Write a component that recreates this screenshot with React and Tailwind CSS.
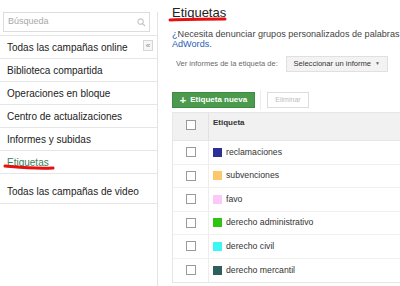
import React from 'react';

const navItems = [
  'Todas las campañas online',
  'Biblioteca compartida',
  'Operaciones en bloque',
  'Centro de actualizaciones',
  'Informes y subidas',
  'Etiquetas',
];

const labels = [
  { name: 'reclamaciones', color: 'bg-[#2e2f94]' },
  { name: 'subvenciones', color: 'bg-[#fdc86a]' },
  { name: 'favo', color: 'bg-[#fbc9f7]' },
  { name: 'derecho administrativo', color: 'bg-[#2fc312]' },
  { name: 'derecho civil', color: 'bg-[#3cf6f6]' },
  { name: 'derecho mercantil', color: 'bg-[#2f5f5c]' },
];

const Checkbox = () => (
  <span className="block w-[10px] h-[10px] border border-[#9a9a9a] bg-white" />
);

const Sidebar = () => (
  <aside className="relative w-[158px] shrink-0 mt-[12px] border-r border-[#e3e3e3]">
    <div className="pl-[3px] pr-[7px] pb-[3px] border-b border-[#e6e6e6]">
      <div className="h-[20px] border border-[#dcdcdc] flex items-center justify-between pl-[4px] pr-[3px]">
        <span className="text-[9px] text-[#a8a8a8]">Búsqueda</span>
        <svg width="9" height="9" viewBox="0 0 10 10" className="text-[#c4c4c4]">
          <circle cx="4" cy="4" r="3" fill="none" stroke="currentColor" strokeWidth="1.2" />
          <path d="M6.2 6.2 L9 9" stroke="currentColor" strokeWidth="1.4" />
        </svg>
      </div>
    </div>
    {navItems.map((item) => (
      <div
        key={item}
        className={`h-[23px] flex items-center pl-[7px] border-b border-[#e6e6e6] text-[10px] whitespace-nowrap ${
          item === 'Etiquetas' ? 'text-[#3b7d57]' : 'text-[#222]'
        }`}
      >
        {item}
      </div>
    ))}
    <div className="h-[30px] flex items-center pt-[6px] pl-[7px] border-b border-[#e6e6e6] text-[10px] text-[#222] whitespace-nowrap">
      Todas las campañas de video
    </div>

    <div className="absolute left-[143px] top-[28px] w-[10px] h-[11px] border border-[#d6d6d6] bg-[#f6f6f6] flex items-center justify-center text-[8px] leading-none text-[#888]">
      «
    </div>

    <svg className="absolute left-[3px] top-[151px]" width="52" height="8" viewBox="0 0 52 8">
      <path d="M2 3 C14 4 30 6 50 5" stroke="#e8100e" strokeWidth="3" fill="none" strokeLinecap="round" />
    </svg>
  </aside>
);

const Main = () => (
  <main className="relative flex-1 min-w-0 overflow-hidden pl-[14px] whitespace-nowrap">
    <h1 className="mt-[5px] text-[13px] leading-[16px] text-[#222]">Etiquetas</h1>
    <svg className="absolute left-[10px] top-[16px]" width="60" height="7" viewBox="0 0 60 7">
      <path d="M2 4 C20 3 40 3 57 3" stroke="#e8100e" strokeWidth="3" fill="none" strokeLinecap="round" />
    </svg>

    <p className="mt-[8px] text-[9.1px] leading-[10px] text-[#444]">
      <span className="text-[#2a5db0]">¿</span>Necesita denunciar grupos personalizados de palabras
    </p>
    <p className="text-[9.1px] leading-[10px] text-[#2a5db0]">AdWords.</p>

    <div className="mt-[7px] flex items-center h-[16px]">
      <span className="ml-[4px] shrink-0 text-[7.5px] text-[#6b6b6b]">Ver informes de la etiqueta de:</span>
      <div className="ml-[8px] shrink-0 w-[102px] h-[16px] border border-[#e0e0e0] bg-[#f3f3f3] flex items-center justify-center gap-[4px] text-[7.6px] text-[#333]">
        Seleccionar un informe
        <span className="text-[5px] text-[#666]">▼</span>
      </div>
    </div>

    <div className="mt-[20px] flex items-center h-[16px]">
      <div className="shrink-0 w-[83px] h-[16px] bg-[#4b9a4e] border border-[#3f8a42] flex items-center justify-center gap-[4px] text-[8px] font-bold text-white">
        <span className="text-[11px] leading-none">+</span>
        Etiqueta nueva
      </div>
      <div className="ml-[5px] shrink-0 w-px h-[20px] bg-[#ececec]" />
      <div className="ml-[6px] shrink-0 w-[42px] h-[16px] border border-[#dcdcdc] bg-white flex items-center justify-center text-[7px] text-[#bcbcbc]">
        Eliminar
      </div>
    </div>

    <div className="mt-[4px] border-l border-t border-b border-[#e6e6e6] w-[260px]">
      <div className="flex h-[28px] bg-[#f1f1f1] border-b border-[#e6e6e6]">
        <div className="w-[36px] border-r border-[#e2e2e2] flex justify-center pt-[7px]">
          <Checkbox />
        </div>
        <div className="pl-[4px] pt-[4px] text-[8px] font-bold text-[#333]">Etiqueta</div>
      </div>
      {labels.map((l, i) => (
        <div
          key={l.name}
          className={`flex h-[23.5px] ${i < labels.length - 1 ? 'border-b border-[#f0f0f0]' : ''}`}
        >
          <div className="w-[36px] border-r border-[#ededed] flex items-center justify-center">
            <Checkbox />
          </div>
          <div className="pl-[4px] flex items-center gap-[4px] text-[8.7px] text-[#333]">
            <span className={`block w-[9px] h-[9px] ${l.color}`} />
            {l.name}
          </div>
        </div>
      ))}
    </div>
  </main>
);

export default function App() {
  return (
    <div className="w-[400px] h-[286px] overflow-hidden bg-white flex font-['Liberation_Sans',Arial,sans-serif]">
      <Sidebar />
      <Main />
    </div>
  );
}
